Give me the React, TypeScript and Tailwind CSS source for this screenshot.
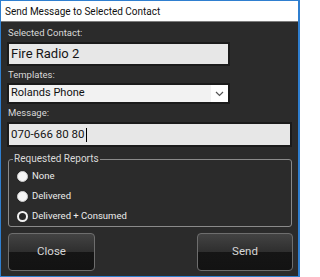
import React from "react";

const font = { fontFamily: 'Roboto, "Noto Sans", sans-serif' };

function Radio({ label, checked }: { label: string; checked?: boolean }) {
  return (
    <div className="flex items-center h-[20px] gap-[4px] pl-[8px]">
      {checked ? (
        <div className="w-[11px] h-[11px] rounded-full border-[2.5px] border-[#f2f2f2] bg-[#262626]" />
      ) : (
        <div className="w-[11px] h-[11px] rounded-full bg-[#f7f7f7] border border-[#cfcfcf]" />
      )}
      <span className="text-[9.5px] text-[#ececec] leading-[14px]">{label}</span>
    </div>
  );
}

function Btn({ label, w }: { label: string; w: string }) {
  return (
    <button
      className={`${w} h-[38px] rounded-[4px] border border-[#6e6e6e] bg-[linear-gradient(to_bottom,#434343_0%,#2e2e2e_50%,#151515_50%,#131313_100%)] text-[11.5px] text-[#d6d6d6] flex items-center justify-center`}
    >
      {label}
    </button>
  );
}

export default function App() {
  return (
    <div
      className="w-[300px] h-[277px] border border-[#2f7fd0] border-r-[2px] flex flex-col bg-white"
      style={font}
    >
      <div className="h-[21px] bg-white flex items-center pl-[4px] text-[10px] text-[#111] border-b border-[#7c7c7c] shrink-0">
        Send Message to Selected Contact
      </div>
      <div className="flex-1 bg-[#2b2b2b] flex flex-col pl-[6px] pt-[3px]">
        <div className="h-[14px] leading-[14px] text-[9.5px] text-[#d9d9d9] mt-[1px] pl-[1px]">
          Selected Contact:
        </div>
        <div className="mt-[2px] w-[223px] h-[24px] border-2 border-[#1b1b1b] bg-[#e7e7e7] flex items-center pl-[2px] text-[13px] text-[#151515]">
          Fire Radio 2
        </div>
        <div className="mt-[2px] h-[14px] leading-[14px] text-[9.5px] text-[#d9d9d9] pl-[1px]">
          Templates:
        </div>
        <div className="mt-[1px] w-[223px] h-[21px] border-2 border-[#1b1b1b] bg-[#f2f2f2] flex items-center">
          <span className="flex-1 pl-[2px] text-[11px] text-[#111]">Rolands Phone</span>
          <span className="w-[17px] h-full bg-white flex items-center justify-center">
            <svg width="9" height="6" viewBox="0 0 9 6">
              <path d="M1 1 L4.5 4.5 L8 1" fill="none" stroke="#555" strokeWidth="1.2" />
            </svg>
          </span>
        </div>
        <div className="mt-[2px] h-[14px] leading-[14px] text-[9.5px] text-[#d9d9d9] pl-[1px]">
          Message:
        </div>
        <div className="mt-[2px] w-[285px] h-[25px] border-2 border-[#1b1b1b] bg-[#e7e7e7] flex items-center pl-[2px] text-[11.5px] text-[#151515]">
          070-666 80 80<span className="inline-block w-[1px] h-[14px] bg-black ml-[1px]" />
        </div>
        <fieldset className="mt-[6px] ml-[1px] w-[284px] h-[74px] border border-[#8a8a8a] rounded-[3px] pb-[4px]">
          <legend className="ml-[4px] px-[1px] text-[10px] leading-[12px] text-[#d9d9d9]">
            Requested Reports
          </legend>
          <div className="mt-[1px] flex flex-col">
            <Radio label="None" />
            <Radio label="Delivered" />
            <Radio label="Delivered + Consumed" checked />
          </div>
        </fieldset>
        <div className="mt-[6px] ml-[1px] w-[285px] flex justify-between">
          <Btn label="Close" w="w-[87px]" />
          <Btn label="Send" w="w-[96px]" />
        </div>
      </div>
    </div>
  );
}
